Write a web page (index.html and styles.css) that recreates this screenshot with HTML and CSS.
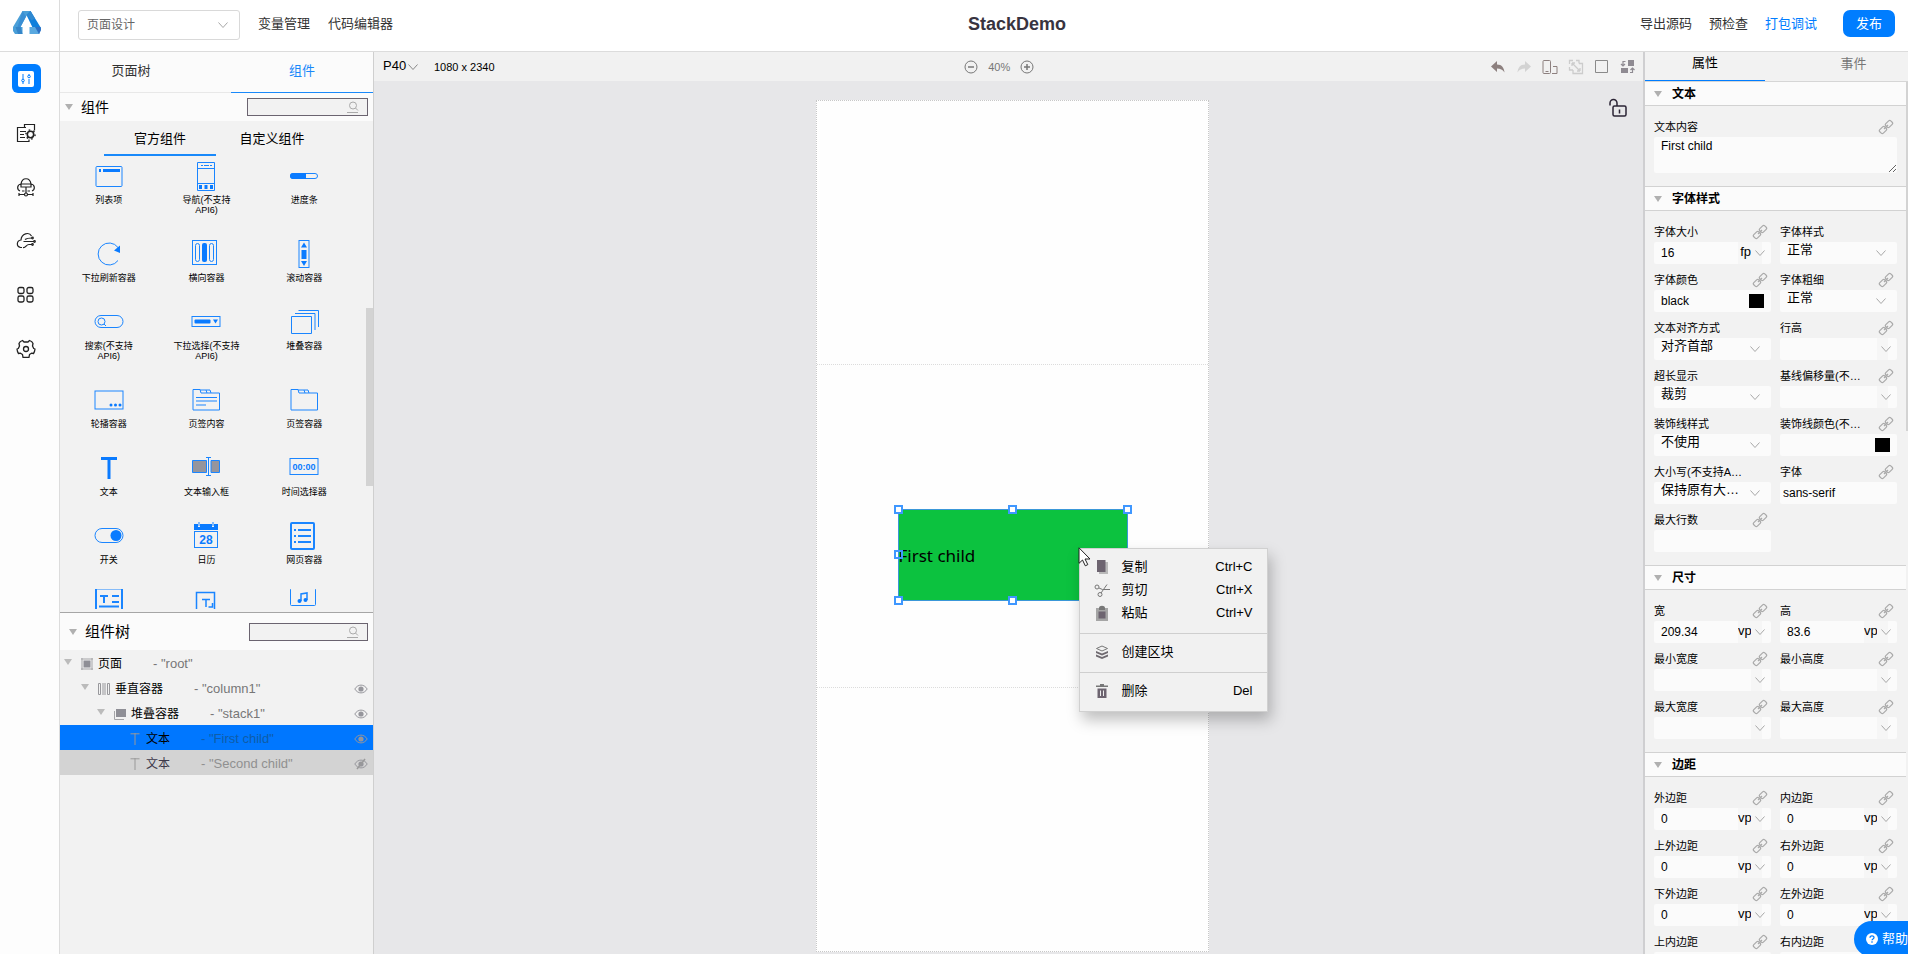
FILE: index.html
```html
<!DOCTYPE html>
<html lang="zh-CN">
<head>
<meta charset="utf-8">
<title>StackDemo</title>
<link rel="stylesheet" href="styles.css">
</head>
<body>
<svg class="sprite" aria-hidden="true">
  <symbol id="chev" viewBox="0 0 12 12"><path d="M1.500 3.500 6 8.500 10.500 3.500" fill="none" stroke="currentColor"/></symbol>
  <symbol id="tri" viewBox="0 0 8 6"><path d="M0 0h8L4 6z" fill="currentColor"/></symbol>
  <symbol id="link" viewBox="0 0 16 16"><g fill="none" stroke="currentColor" stroke-width="1.200"><rect x="7.500" y="2.500" width="7" height="5" rx="1.500" transform="rotate(-45 11 5)"/><rect x="1.500" y="8.500" width="7" height="5" rx="1.500" transform="rotate(-45 5 11)"/><path d="M6 10l4-4"/></g></symbol>
  <symbol id="mag" viewBox="0 0 12 12"><g fill="none" stroke="currentColor"><circle cx="6" cy="4.500" r="3.500"/><path d="M8.500 7l2.500 2.500M0 11.500h11"/></g></symbol>
  <symbol id="eye" viewBox="0 0 14 12"><path d="M.8 6C4 .8 10 .8 13.200 6 10 11.200 4 11.200.8 6z" fill="none" stroke="currentColor"/><circle cx="7" cy="6" r="2.600" fill="currentColor"/></symbol>
</svg>

<header class="topbar">
  <a class="logo" href="#" aria-label="首页">
    <svg width="30" height="26" viewBox="0 0 30 26"><path d="M10.500 1h8L20 4l-5 1L8.500 17H1z" fill="#4a9fd8"/><path d="M10.500 1 14 6.500 8.500 17H5.500z" fill="#3a8fd4"/><path d="M18.500 1 29 18l-1 4-4.500 1.500-2.500-5L14.500 5z" fill="#0f7fdc"/><path d="M18.500 1l4.500 7.500-3.500 2-5-5.500z" fill="#2f88d0"/><path d="M1 17h9.500v7H3L1 21z" fill="#4a9fd8"/><path d="M3.500 17h5l2 7H6z" fill="#3585c8"/><path d="M17.500 17h6l4.500 6-1 1h-9.500z" fill="#5aa9e0"/><path d="M23 17l5.500 0 .5 3-2 4z" fill="#2b6fc4"/></svg>
  </a>
  <div class="topbar-left">
    <div class="mode">
      <select aria-label="模式"><option>页面设计</option></select>
      <svg class="chev" width="12" height="12"><use href="#chev"/></svg>
    </div>
    <a href="#">变量管理</a>
    <a href="#">代码编辑器</a>
  </div>
  <h1>StackDemo</h1>
  <nav class="topbar-right">
    <a href="#">导出源码</a>
    <a href="#">预检查</a>
    <a href="#" class="accent">打包调试</a>
    <button class="publish" type="button">发布</button>
  </nav>
</header>

<div class="workspace">
  <nav class="rail">
    <button type="button" class="on" aria-label="设计"><svg width="16" height="16" viewBox="0 0 16 16"><rect width="16" height="16" rx="2" fill="#fff"/><g stroke="#007dff" fill="none"><path d="M5 3v5M5 11v2M11 3v1M11 8v5"/><circle cx="5" cy="9.500" r="1.300"/><circle cx="11" cy="5.500" r="1.300"/></g></svg></button>
    <button type="button" aria-label="数据模型"><svg width="20" height="20" viewBox="0 0 20 20" fill="none" stroke="#222" stroke-width="1.200"><path d="M8.500 4V1.500H18.500v6M10 4.500H1.500v14H13v-2M4 8.500h6M4 11.500h4M4 14.500h5"/><circle cx="14.500" cy="11.500" r="3.200" stroke-width="1.600"/><circle cx="14.500" cy="11.500" r="4.600" stroke-width="1.400" stroke-dasharray="1.600 3.200"/></svg></button>
    <button type="button" aria-label="云连接"><svg width="20" height="20" viewBox="0 0 20 20" fill="none" stroke="#222" stroke-width="1.200"><path d="M4 14c-3.500-1.500-3-6.500 1-7C6 0 14 0 15 7c4 .5 4.500 5.500 1 7M5 7h10v3H5zM10 10v6M3 17.500h14M6 14h2.500M11.500 14H14"/><circle cx="10" cy="17.500" r="1.500" fill="#fff"/><path d="M3 16v3M17 16v3"/></svg></button>
    <button type="button" aria-label="云函数"><svg width="20" height="20" viewBox="0 0 20 20" fill="none" stroke="#222" stroke-width="1.200"><path d="M6 16.500H4.500C0 15.500.5 9.500 5 9 5.500 2.500 13 .5 15.500 5M7 16.500c3 .5 3-3 6-3h3M7.500 10.500H18M9 8.500c2-1.500 4-1.500 7-1.500"/><circle cx="16.500" cy="7" r=".8"/><circle cx="18.500" cy="10.500" r=".8"/><circle cx="16.500" cy="13.500" r=".8"/></svg></button>
    <button type="button" aria-label="模块"><svg width="20" height="20" viewBox="0 0 20 20" fill="none" stroke="#222" stroke-width="1.300"><rect x="2" y="2.500" width="6" height="6" rx="1.800"/><rect x="11" y="2.500" width="6" height="6" rx="1.800"/><rect x="2" y="11" width="6" height="6" rx="1.800"/><rect x="11" y="11" width="6" height="6" rx="1.800"/></svg></button>
    <button type="button" aria-label="设置"><svg width="20" height="20" viewBox="0 0 20 20" fill="none" stroke="#222" stroke-width="1.300"><path d="M6.500 1.500 8 3h4l1.500-1.500c2 .7 3 1.700 3.500 3L16.500 7l1.200 2.500L19 10c-.2 2-.6 3.300-1.500 4.500l-2-.3-2 1.300-.5 2.800h-6l-.5-2.800-2-1.300-2 .3C1.600 13.300 1.200 12 1 10l1.300-.5L3.500 7 3 4.500c.5-1.300 1.500-2.300 3.500-3z" stroke-linejoin="round"/><circle cx="10" cy="10" r="2.500"/></svg></button>
  </nav>

  <aside class="library">
    <div class="tabs"><button type="button">页面树</button><button type="button" class="on">组件</button></div>
    <div class="panel-head">
      <svg class="tri" width="8" height="6"><use href="#tri"/></svg><h2>组件</h2>
      <div class="search"><input type="text" aria-label="搜索组件"><svg width="12" height="12"><use href="#mag"/></svg></div>
    </div>
    <div class="components">
      <div class="subtabs"><button type="button" class="on">官方组件</button><button type="button">自定义组件</button></div>
      <ul class="palette">
        <li><svg viewBox="0 0 30 30"><rect x="2" y="5.500" width="26" height="20" rx="1"/><path class="f" d="M5 8h2v3H5zM9 8h17v3H9z"/></svg><span>列表项</span></li>
        <li><svg viewBox="0 0 30 30"><path d="M6.500 1.500h17v28h-17zM6.500 7.500h17M6.500 22.500h17M10 4.500h2M13 4.500h5M19 4.500h2"/><path class="f" d="M8 24h3v4H8zM13.500 24h3v4h-3zM19 24h3v4h-3z"/></svg><span>导航(不支持API6)</span></li>
        <li><svg viewBox="0 0 30 30"><rect x="1.500" y="12.500" width="27" height="5" rx="2.500"/><path class="f" d="M4 12h13v6H4a3 3 0 0 1 0-6z"/></svg><span>进度条</span></li>
        <li><svg viewBox="0 0 30 30"><path d="M24 21.500a11 11 0 1 1 0-13"/><path class="f" d="M20 11.500 26 6.500V14z"/></svg><span>下拉刷新容器</span></li>
        <li><svg viewBox="0 0 30 30"><rect x="1.500" y="1.500" width="24" height="24"/><rect x="4.500" y="4.500" width="4" height="18" rx="2"/><rect class="f" x="11" y="4" width="5" height="19" rx="2"/><rect x="18.500" y="4.500" width="4" height="18" rx="2"/></svg><span>横向容器</span></li>
        <li><svg viewBox="0 0 30 30"><rect x="10" y="1.500" width="10" height="27"/><path class="f" d="M15 3.500l3 5h-6zM12.500 11h5v9h-5zM12 22h6l-3 5z"/></svg><span>滚动容器</span></li>
        <li><svg viewBox="0 0 30 30"><rect x="1" y="8.500" width="28" height="12" rx="6"/><circle cx="7.500" cy="14.500" r="3.500"/><path d="M10 17l2 2"/></svg><span>搜索(不支持API6)</span></li>
        <li><svg viewBox="0 0 30 30"><rect x="1" y="9.500" width="28" height="10"/><rect class="f" x="3.500" y="12.500" width="16" height="4" rx="1"/><path class="f" d="M22 12.500h5l-2.500 4z"/></svg><span>下拉选择(不支持API6)</span></li>
        <li><svg viewBox="0 0 30 30"><path d="M2.500 9.500h20v17h-20zM6 6.500h20V23M9.500 3.500h20V20"/></svg><span>堆叠容器</span></li>
        <li><svg viewBox="0 0 30 30"><rect x="1" y="6" width="28" height="18"/><circle class="f" cx="17" cy="20" r="1.500"/><circle class="f" cx="21.500" cy="20" r="1.500"/><circle class="f" cx="26" cy="20" r="1.500"/></svg><span>轮播容器</span></li>
        <li><svg viewBox="0 0 30 30"><path d="M2 24.500v-20h7l1 3.500h18.500v17H2zM9 5h6l1 3M15 5h4l1 3M5 12.500h21M5 16h21M5 20h10"/></svg><span>页签内容</span></li>
        <li><svg viewBox="0 0 30 30"><path d="M2 24.500v-20h7l1 3.500h18.500v17H2zM9 5h6l1 3M15 5h4l1 3"/></svg><span>页签容器</span></li>
        <li><svg viewBox="0 0 30 30"><path class="f" d="M7 4h16v3h-6.500v19h-3V7H7z"/></svg><span>文本</span></li>
        <li><svg viewBox="0 0 30 30"><path class="g" d="M1.500 7.500h14v12h-14zM20 7.500h8.500v12H20z"/><path d="M17.500 5v18M15 4.500h5M15 22.500h5"/></svg><span>文本输入框</span></li>
        <li><svg viewBox="0 0 30 30"><rect x="1" y="5.500" width="28" height="16"/><text x="15" y="17" font-size="9">00:00</text></svg><span>时间选择器</span></li>
        <li><svg viewBox="0 0 30 30"><rect x="1" y="7.500" width="28" height="14" rx="7"/><circle class="f" cx="22" cy="14.500" r="5.500"/></svg><span>开关</span></li>
        <li><svg viewBox="0 0 30 30"><rect x="3.500" y="10.500" width="23" height="16"/><path class="f" d="M3 3h4v3h2V3h12v3h2V3h4v6H3z"/><path d="M8 1v4M22 1v4"/><text x="15" y="23" font-size="12">28</text></svg><span>日历</span></li>
        <li><svg viewBox="0 0 30 30"><rect x="2" y="2" width="23" height="26" rx="1" stroke-width="2"/><path stroke-width="2" d="M5 9h2M9 9h13M5 15h2M9 15h13M5 21h2M9 21h13"/></svg><span>网页容器</span></li>
        <li><svg viewBox="0 0 30 30"><path stroke-width="2" d="M2 30V-.5h26V30M6 7h8M10 7v7M18 7h7M18 13h7M5 17.500h20"/></svg></li>
        <li><svg viewBox="0 0 30 30"><path d="M5.500 30V3.500h18V30M11 10.500h8M15 10.500V18M17.500 18h4v-4" stroke-width="1.500"/></svg></li>
        <li><svg viewBox="0 0 30 30"><rect x="1.500" y="-.5" width="25" height="17" rx="1"/><path d="M12 12V5l6-1v7" stroke-width="1.500"/><circle class="f" cx="10.500" cy="12" r="2"/><circle class="f" cx="16.500" cy="11" r="2"/></svg></li>
      </ul>
      <div class="scroll-thumb"></div>
    </div>
    <div class="panel-head tree-head">
      <svg class="tri" width="8" height="6"><use href="#tri"/></svg><h2>组件树</h2>
      <div class="search"><input type="text" aria-label="搜索组件树"><svg width="12" height="12"><use href="#mag"/></svg></div>
    </div>
    <ul class="tree">
      <li class="lv0"><svg class="tri" width="8" height="6"><use href="#tri"/></svg><svg width="12" height="12" viewBox="0 0 12 12"><path d="M1 0v12M11 0v12M0 1h12M0 11h12" stroke="#a5a5a8"/><path d="M2.500 2.500h7v7h-7z" fill="#8f8f96"/></svg><b>页面</b><i>- "root"</i></li>
      <li class="lv1"><svg class="tri" width="8" height="6"><use href="#tri"/></svg><svg width="12" height="12" viewBox="0 0 12 12" fill="none" stroke="#98989c"><path d="M.5.500h2v11h-2zM9.500.500h2v11h-2zM5 0v12M7 0v12"/></svg><b>垂直容器</b><i>- "column1"</i><svg class="eye" width="14" height="12"><use href="#eye"/></svg></li>
      <li class="lv2"><svg class="tri" width="8" height="6"><use href="#tri"/></svg><svg width="12" height="12" viewBox="0 0 12 12"><path d="M2 1h10v8H2z" fill="#8f8f96"/><path d="M.5 3v8.500H10" fill="none" stroke="#a5a5a8"/></svg><b>堆叠容器</b><i>- "stack1"</i><svg class="eye" width="14" height="12"><use href="#eye"/></svg></li>
      <li class="lv3 selected"><svg width="12" height="12" viewBox="0 0 12 12"><path d="M1.500.8h9M6 0v12" stroke="#999" fill="none"/></svg><b>文本</b><i>- "First child"</i><svg class="eye" width="14" height="12"><use href="#eye"/></svg></li>
      <li class="lv3 hidden-node"><svg width="12" height="12" viewBox="0 0 12 12"><path d="M1.500.8h9M6 0v12" stroke="#999" fill="none"/></svg><b>文本</b><i>- "Second child"</i><svg class="eye" width="14" height="12" viewBox="0 0 14 12"><use href="#eye"/><path d="M3 11 11 1" stroke="#999" stroke-width="1.500"/></svg></li>
    </ul>
  </aside>

  <main class="stage">
    <div class="toolbar">
      <div class="device"><select aria-label="设备"><option>P40</option></select><svg class="chev" width="12" height="12"><use href="#chev"/></svg></div>
      <span class="size">1080 x 2340</span>
      <div class="zoom">
        <button type="button" aria-label="缩小"><svg width="14" height="14" viewBox="0 0 14 14" fill="none" stroke="#777"><circle cx="7" cy="7" r="6"/><path d="M4 7h6" stroke-width="1.500"/></svg></button>
        <span>40%</span>
        <button type="button" aria-label="放大"><svg width="14" height="14" viewBox="0 0 14 14" fill="none" stroke="#777"><circle cx="7" cy="7" r="6"/><path d="M4 7h6M7 4v6" stroke-width="1.500"/></svg></button>
      </div>
      <div class="tools">
        <button type="button" aria-label="撤销"><svg width="16" height="16" viewBox="0 0 16 16"><path d="M1 7.500 7 2v3.500c5 0 7 3.500 7.500 8C12.500 10.500 10.500 9.500 7 9.500V13z" fill="#8d807f"/></svg></button>
        <button type="button" aria-label="重做"><svg width="16" height="16" viewBox="0 0 16 16"><path d="M15 7.500 9 2v3.500c-5 0-7 3.500-7.500 8C3.500 10.500 5.500 9.500 9 9.500V13z" fill="#d3d3d3"/></svg></button>
        <button type="button" aria-label="多设备"><svg width="16" height="16" viewBox="0 0 16 16" fill="none" stroke="#8d807f"><rect x="1" y="1.500" width="7.500" height="13" rx="1"/><path d="M3.500 12.500h3M11 7.500h4v7h-5"/></svg></button>
        <button type="button" aria-label="适应窗口"><svg width="16" height="16" viewBox="0 0 16 16" fill="none" stroke="#ccc"><path d="M1.500 5V1.500H5M11 4.500h3.500v10H5V11M1.500 8v3H5M8 1.500h3v3M4 4l8 8M4 4h3M4 4v3M12 12H9M12 12V9" stroke-width="1.300"/></svg></button>
        <button type="button" aria-label="边框"><svg width="16" height="16" viewBox="0 0 16 16" fill="none" stroke="#8a8a8a"><path d="M1.500 1.500h12v12h-12z"/></svg></button>
        <button type="button" aria-label="转换"><svg width="16" height="16" viewBox="0 0 16 16"><path d="M8 1h6v6H8zM1 9h7v5H1z" fill="#8f8b92"/><path d="M5.500 2.500H3V7M1 5l2 2 2-2M10 13.500h2.500V9M10.500 11l2-2 2 2" fill="none" stroke="#8f8b92" stroke-width="1.200"/></svg></button>
      </div>
    </div>
    <div class="canvas">
      <button class="lock" type="button" aria-label="解锁"><svg width="20" height="20" viewBox="0 0 20 20" fill="none" stroke="#2b2435" stroke-width="1.500"><rect x="5" y="8" width="13" height="10" rx="1.500"/><path d="M2 7.500V5a3.500 3.500 0 0 1 7 0v3M11.500 11.500v4"/></svg></button>
      <div class="artboard">
        <span class="guide one"></span><span class="guide two"></span>
        <div class="node">First child
          <i class="h tl"></i><i class="h tc"></i><i class="h tr"></i><i class="h ml"></i><i class="h bl"></i><i class="h bc"></i>
        </div>
        <div class="menu">
          <div class="group">
            <button type="button"><svg width="16" height="16" viewBox="0 0 16 16"><path d="M5 3h9v12H5z" fill="#b9b9b9"/><path d="M3 1h8.500v12H3z" fill="#6d6470"/></svg>复制<kbd>Ctrl+C</kbd></button>
            <button type="button"><svg width="16" height="16" viewBox="0 0 16 16" fill="none" stroke="#777"><circle cx="3" cy="5" r="2"/><circle cx="6" cy="12.500" r="2"/><path d="M5 6l3.500 1.500H16M7 11l6-8.500"/></svg>剪切<kbd>Ctrl+X</kbd></button>
            <button type="button"><svg width="16" height="16" viewBox="0 0 16 16"><path d="M2 3h12v13H2z" fill="#a5a5a5"/><path d="M5 3c0-3 6-3 6 0v2H5z" fill="#777"/><path d="M4.500 6.500h7v7h-7z" fill="#6d6470"/></svg>粘贴<kbd>Ctrl+V</kbd></button>
          </div>
          <div class="group">
            <button type="button"><svg width="16" height="16" viewBox="0 0 16 16"><path d="M8 2l5.500 2.500L8 7 2.500 4.500z" fill="none" stroke="#777"/><path d="M2 7l6 2.500L14 7v2l-6 2.500L2 9zM2 10.500 8 13l6-2.500v2L8 15l-6-2.500z" fill="#6f6a70"/></svg>创建区块</button>
          </div>
          <div class="group">
            <button type="button"><svg width="16" height="16" viewBox="0 0 16 16"><path d="M2 2.500h4V1h4v1.500h4V4H2z" fill="#777"/><path d="M3.500 5.500h9V15h-9z" fill="#6d6470"/><path d="M6.500 7.500V13M9.500 7.500V13" stroke="#eee"/></svg>删除<kbd>Del</kbd></button>
          </div>
        </div>
        <svg class="cursor" width="14" height="20" viewBox="0 0 14 20"><path d="M1 .8v15.500l3.500-3.300 2.800 5.800 2.500-1.200-2.800-5.600H12z" fill="#fff" stroke="#222"/></svg>
      </div>
    </div>
  </main>

  <aside class="inspector">
    <div class="tabs"><button type="button" class="on">属性</button><button type="button">事件</button></div>
    <div class="sections">
      <section>
        <h3><svg class="tri" width="8" height="6"><use href="#tri"/></svg>文本</h3>
        <div class="fields">
          <div class="field wide"><div class="cap"><label for="txt">文本内容</label><svg><use href="#link"/></svg></div><textarea id="txt">First child</textarea></div>
        </div>
      </section>
      <section>
        <h3><svg class="tri" width="8" height="6"><use href="#tri"/></svg>字体样式</h3>
        <div class="fields">
          <div class="field"><div class="cap"><label for="fs">字体大小</label><svg><use href="#link"/></svg></div><div class="ctl"><input id="fs" type="text" value="16"><span class="unit"><select aria-label="单位"><option>fp</option></select><svg class="chev"><use href="#chev"/></svg></span></div></div>
          <div class="field"><div class="cap"><label for="fst">字体样式</label></div><div class="ctl pick"><select id="fst"><option>正常</option></select><svg class="chev"><use href="#chev"/></svg></div></div>
          <div class="field"><div class="cap"><label for="fc">字体颜色</label><svg><use href="#link"/></svg></div><div class="ctl"><input id="fc" type="text" value="black"><span class="swatch"></span></div></div>
          <div class="field"><div class="cap"><label for="fw">字体粗细</label><svg><use href="#link"/></svg></div><div class="ctl pick"><select id="fw"><option>正常</option></select><svg class="chev"><use href="#chev"/></svg></div></div>
          <div class="field"><div class="cap"><label for="ta">文本对齐方式</label></div><div class="ctl pick"><select id="ta"><option>对齐首部</option></select><svg class="chev"><use href="#chev"/></svg></div></div>
          <div class="field"><div class="cap"><label for="lh">行高</label><svg><use href="#link"/></svg></div><div class="ctl"><input id="lh" type="text"><span class="unit blank"><select aria-label="单位"><option></option></select><svg class="chev"><use href="#chev"/></svg></span></div></div>
          <div class="field"><div class="cap"><label for="of">超长显示</label></div><div class="ctl pick"><select id="of"><option>裁剪</option></select><svg class="chev"><use href="#chev"/></svg></div></div>
          <div class="field"><div class="cap"><label for="bo">基线偏移量(不…</label><svg><use href="#link"/></svg></div><div class="ctl"><input id="bo" type="text"><span class="unit blank"><select aria-label="单位"><option></option></select><svg class="chev"><use href="#chev"/></svg></span></div></div>
          <div class="field"><div class="cap"><label for="ds">装饰线样式</label></div><div class="ctl pick"><select id="ds"><option>不使用</option></select><svg class="chev"><use href="#chev"/></svg></div></div>
          <div class="field"><div class="cap"><label for="dc">装饰线颜色(不…</label><svg><use href="#link"/></svg></div><div class="ctl"><input id="dc" type="text"><span class="swatch"></span></div></div>
          <div class="field"><div class="cap"><label for="tc">大小写(不支持A…</label></div><div class="ctl pick"><select id="tc"><option>保持原有大…</option></select><svg class="chev"><use href="#chev"/></svg></div></div>
          <div class="field"><div class="cap"><label for="ff">字体</label><svg><use href="#link"/></svg></div><div class="ctl tight"><input id="ff" type="text" value="sans-serif"></div></div>
          <div class="field"><div class="cap"><label for="ml">最大行数</label><svg><use href="#link"/></svg></div><div class="ctl"><input id="ml" type="text"></div></div>
        </div>
      </section>
      <section>
        <h3><svg class="tri" width="8" height="6"><use href="#tri"/></svg>尺寸</h3>
        <div class="fields">
          <div class="field"><div class="cap"><label for="w">宽</label><svg><use href="#link"/></svg></div><div class="ctl"><input id="w" type="text" value="209.34"><span class="unit"><select aria-label="单位"><option>vp</option></select><svg class="chev"><use href="#chev"/></svg></span></div></div>
          <div class="field"><div class="cap"><label for="h">高</label><svg><use href="#link"/></svg></div><div class="ctl"><input id="h" type="text" value="83.6"><span class="unit"><select aria-label="单位"><option>vp</option></select><svg class="chev"><use href="#chev"/></svg></span></div></div>
          <div class="field"><div class="cap"><label for="mw">最小宽度</label><svg><use href="#link"/></svg></div><div class="ctl"><input id="mw" type="text"><span class="unit blank"><select aria-label="单位"><option></option></select><svg class="chev"><use href="#chev"/></svg></span></div></div>
          <div class="field"><div class="cap"><label for="mh">最小高度</label><svg><use href="#link"/></svg></div><div class="ctl"><input id="mh" type="text"><span class="unit blank"><select aria-label="单位"><option></option></select><svg class="chev"><use href="#chev"/></svg></span></div></div>
          <div class="field"><div class="cap"><label for="xw">最大宽度</label><svg><use href="#link"/></svg></div><div class="ctl"><input id="xw" type="text"><span class="unit blank"><select aria-label="单位"><option></option></select><svg class="chev"><use href="#chev"/></svg></span></div></div>
          <div class="field"><div class="cap"><label for="xh">最大高度</label><svg><use href="#link"/></svg></div><div class="ctl"><input id="xh" type="text"><span class="unit blank"><select aria-label="单位"><option></option></select><svg class="chev"><use href="#chev"/></svg></span></div></div>
        </div>
      </section>
      <section>
        <h3><svg class="tri" width="8" height="6"><use href="#tri"/></svg>边距</h3>
        <div class="fields">
          <div class="field"><div class="cap"><label for="m">外边距</label><svg><use href="#link"/></svg></div><div class="ctl"><input id="m" type="text" value="0"><span class="unit"><select aria-label="单位"><option>vp</option></select><svg class="chev"><use href="#chev"/></svg></span></div></div>
          <div class="field"><div class="cap"><label for="p">内边距</label><svg><use href="#link"/></svg></div><div class="ctl"><input id="p" type="text" value="0"><span class="unit"><select aria-label="单位"><option>vp</option></select><svg class="chev"><use href="#chev"/></svg></span></div></div>
          <div class="field"><div class="cap"><label for="mt">上外边距</label><svg><use href="#link"/></svg></div><div class="ctl"><input id="mt" type="text" value="0"><span class="unit"><select aria-label="单位"><option>vp</option></select><svg class="chev"><use href="#chev"/></svg></span></div></div>
          <div class="field"><div class="cap"><label for="mr">右外边距</label><svg><use href="#link"/></svg></div><div class="ctl"><input id="mr" type="text" value="0"><span class="unit"><select aria-label="单位"><option>vp</option></select><svg class="chev"><use href="#chev"/></svg></span></div></div>
          <div class="field"><div class="cap"><label for="mb">下外边距</label><svg><use href="#link"/></svg></div><div class="ctl"><input id="mb" type="text" value="0"><span class="unit"><select aria-label="单位"><option>vp</option></select><svg class="chev"><use href="#chev"/></svg></span></div></div>
          <div class="field"><div class="cap"><label for="mlf">左外边距</label><svg><use href="#link"/></svg></div><div class="ctl"><input id="mlf" type="text" value="0"><span class="unit"><select aria-label="单位"><option>vp</option></select><svg class="chev"><use href="#chev"/></svg></span></div></div>
          <div class="field"><div class="cap"><label for="pt">上内边距</label><svg><use href="#link"/></svg></div><div class="ctl"><input id="pt" type="text"></div></div>
          <div class="field"><div class="cap"><label for="pr">右内边距</label><svg><use href="#link"/></svg></div><div class="ctl"><input id="pr" type="text"></div></div>
        </div>
      </section>
    </div>
    <div class="scroll-thumb"></div>
  </aside>
</div>
<button class="help" type="button"><svg width="12" height="12" viewBox="0 0 12 12"><circle cx="6" cy="6" r="6" fill="#fff"/><path d="M4 4.800c0-2.500 4-2.500 4-.2C8 6 6 6 6 7.300M6 8.300v1.400" fill="none" stroke="#007dff" stroke-width="1.300"/></svg>帮助</button>
</body>
</html>
```
FILE: styles.css
```css
* { box-sizing: border-box; }
html, body { height: 100%; }
body {
  margin: 0;
  display: flex;
  flex-direction: column;
  overflow: hidden;
  background: #fff;
  color: #000;
  font: 13px/20px "Liberation Sans", "Noto Sans CJK SC", sans-serif;
}
h1, h2, h3, ul { margin: 0; padding: 0; }
ul { list-style: none; }
a { color: inherit; text-decoration: none; }
button, input, select, textarea {
  font: inherit;
  color: inherit;
  border: 0;
  margin: 0;
  padding: 0;
  background: none;
  border-radius: 0;
  outline: 0;
  min-width: 0;
}
select { appearance: none; }
svg { display: block; flex: none; }
.sprite { position: absolute; width: 0; height: 0; }
.tri { color: #b0b0b0; }
.chev { color: #a8a8a8; pointer-events: none; }

/* top bar */
.topbar {
  display: grid;
  grid-template-columns: 60px 1fr auto 1fr;
  flex: none;
  height: 52px;
  border-bottom: 1px solid #dcdcdc;
  background: #fff;
  color: #333;
}
.logo { display: grid; place-items: center; padding: 0 6px 5px 0; border-right: 1px solid #dcdcdc; }
.topbar-left { display: flex; gap: 18px; align-items: center; padding: 0 0 4px 18px; }
.mode { display: grid; width: 162px; height: 30px; border: 1px solid #d9d9d9; border-radius: 3px; color: #666; font-size: 12px; margin-top: 2px; }
.mode select, .mode svg { grid-area: 1 / 1; }
.mode select { padding-left: 8px; }
.mode svg { place-self: center end; margin-right: 10px; }
.topbar h1 { align-self: center; padding: 0 0 4px 66px; font-size: 18px; color: #38343f; }
.topbar-right { display: flex; justify-content: flex-end; align-items: center; gap: 17px; padding: 0 13px 4px 0; }
.accent { color: #007dff; }
.publish { width: 52px; height: 27px; margin-left: 9px; border-radius: 7px; background: #007dff; color: #fff; }

.workspace { display: flex; flex: 1; min-height: 0; }

/* icon rail */
.rail { display: flex; flex-direction: column; align-items: center; gap: 25px; flex: none; width: 60px; padding: 12px 7px 0 0; border-right: 1px solid #dcdcdc; background: #fdfdfd; }
.rail button { display: grid; place-items: center; width: 29px; height: 29px; border-radius: 6px; }
.rail .on { background: #007dff; }

/* component library */
.library { display: flex; flex-direction: column; flex: none; width: 314px; border-right: 1px solid #cfcfcf; background: #f2f2f2; }
.library .tabs { display: grid; grid-template-columns: 171fr 142fr; flex: none; height: 41px; background: #fbfbfb; border-bottom: 1px solid #e8e8e8; }
.library .tabs button { margin-bottom: -1px; padding: 0 29px 3px 0; color: #333; }
.library .tabs .on { padding-right: 0; color: #1989fa; border-bottom: 1px solid #1989fa; }
.panel-head { display: flex; align-items: center; flex: none; gap: 8px; height: 28px; padding: 0 5px; background: #fbfbfb; }
.panel-head h2 { flex: 1; font-size: 14px; font-weight: 400; }
.search { display: flex; align-items: center; width: 121px; height: 18px; padding-right: 8px; border: 1px solid #6b6470; background: #f2f2f2; color: #aaa; }
.search input { flex: 1; }
.components { position: relative; flex: none; height: 488px; overflow: hidden; }
.subtabs { display: flex; padding-left: 44px; }
.subtabs button { width: 112px; height: 35px; padding-top: 2px; border-bottom: 2px solid transparent; }
.subtabs .on { border-color: #1989fa; }
.palette { display: grid; grid-template-columns: repeat(3, 1fr); row-gap: 24px; padding: 5px 20px 0 0; }
.palette li { display: flex; flex-direction: column; align-items: center; gap: 4px; font-size: 9px; line-height: 10px; text-align: center; }
.palette span { width: 70px; }
.palette svg { width: 30px; height: 30px; fill: none; stroke: #1a85ff; }
.palette .f { fill: #0a7bff; stroke: none; }
.palette .g { fill: #95959d; }
.palette text { fill: #0a7bff; stroke: none; text-anchor: middle; font-weight: 700; }
.scroll-thumb { position: absolute; right: 0; background: #d3d3d3; }
.components .scroll-thumb { top: 187px; width: 7px; height: 178px; }
.tree-head { height: 38px; margin-top: 3px; padding-left: 9px; border-top: 1px solid #a6a6a6; }
.tree-head h2 { font-size: 15px; }
.tree-head .search { width: 119px; }
.tree li { display: flex; align-items: center; height: 25px; padding: 2px 5px 0 4px; font-size: 12px; }
.tree .tri { margin: 0 9px 4px 0; color: #bbb; }
.tree b { margin: 0 31px 0 5px; font-weight: 400; }
.tree i { flex: 1; font-size: 13px; font-style: normal; color: #777; }
.tree .lv1 { padding-left: 21px; }
.tree .lv2 { padding-left: 37px; }
.tree .lv3 { padding-left: 69px; }
.tree .eye { color: #96969c; }
.tree .selected { background: #0077ff; }
.tree .selected i { color: #0f5da8; }
.tree .hidden-node { background: #d3d3d3; color: #3d394a; }
.tree .hidden-node i { color: #909090; }

/* stage */
.stage { display: flex; flex-direction: column; flex: 1; min-width: 0; background: #e7e7e9; }
.toolbar { display: grid; grid-template-columns: auto auto 1fr 1fr; align-items: center; flex: none; height: 29px; padding: 0 7px 0 9px; background: #f1f1f1; }
.device { display: grid; width: 36px; }
.device select, .device svg { grid-area: 1 / 1; }
.device svg { place-self: center end; color: #888; }
.device select { padding-bottom: 2px; }
.size { margin-left: 15px; font-size: 11px; }
.zoom { display: flex; align-items: center; gap: 10px; justify-self: end; padding-right: 31px; font-size: 11px; color: #777; }
.tools { display: flex; gap: 10px; justify-self: end; }
.canvas { position: relative; display: flex; justify-content: center; flex: 1; min-height: 0; padding: 19px 0 0 7px; overflow: hidden; }
.lock { position: absolute; top: 17px; right: 15px; }
.artboard { position: relative; flex: none; align-self: flex-start; width: 393px; aspect-ratio: 1080 / 2340; background: #fefefe; border: 1px dotted #c8c8c8; }
.guide { position: absolute; left: 0; right: 0; border-top: 1px dotted #dcdcdc; }
.guide.one { top: 263px; }
.guide.two { top: 586px; }
.node { position: absolute; left: 81px; top: 408px; width: 230px; height: 92px; border: 1px solid #3a97d8; background: #0cc23f; font: 17px/92px "Noto Sans", sans-serif; }
.h { position: absolute; width: 9px; height: 9px; border: 2px solid #3f97ff; background: #fff; }
.tl, .tc, .tr { top: -5px; }
.bl, .bc { bottom: -5px; }
.tl, .ml, .bl { left: -5px; }
.tc, .bc { left: 109px; }
.tr { right: -5px; }
.ml { top: 40px; background: none; }
.menu { position: absolute; left: 262px; top: 447px; width: 189px; border: 1px solid #d0d0d0; background: #f1f1f1; box-shadow: 3px 8px 14px rgba(0, 0, 0, .25); }
.group { padding: 6px 0 9px; }
.group + .group { border-top: 1px solid #cfcfcf; }
.menu button { display: flex; align-items: center; gap: 12px; width: 100%; height: 23px; padding: 0 14px; }
.menu kbd { flex: 1; text-align: right; font: 13px/20px "Liberation Sans", sans-serif; }
.cursor { position: absolute; left: 261px; top: 446px; }

/* inspector */
.inspector { position: relative; display: flex; flex-direction: column; flex: none; width: 265px; border-left: 2px solid #cfcfd1; background: #f2f2f2; }
.inspector .tabs { display: grid; grid-template-columns: 120fr 143fr; flex: none; height: 30px; border-bottom: 1px solid #d6d6d6; }
.inspector .tabs button { padding: 0 0 6px 34px; color: #777; }
.inspector .tabs .on { padding-left: 0; border-bottom: 1px solid #007dff; color: #000; }
.sections { flex: 1; min-height: 0; overflow: hidden; margin-right: 2px; }
.inspector > .scroll-thumb { top: 30px; width: 2px; height: 349px; }
.sections h3 { display: flex; align-items: center; gap: 10px; height: 25px; padding-left: 9px; border: 1px solid #d2d2d2; border-width: 1px 0; background: #fbfbfb; font-size: 12px; }
section:first-child h3 { border-top: 0; height: 24px; }
.fields { display: grid; grid-template-columns: 1fr 1fr; gap: 6px 9px; padding: 11px 9px 13px; }
.wide { grid-column: 1 / -1; }
.cap { display: flex; align-items: center; justify-content: space-between; height: 20px; padding-right: 3px; font-size: 11px; }
.cap svg { width: 16px; height: 16px; color: #aaa; }
.ctl { display: flex; align-items: center; height: 22px; padding-left: 7px; background: #fbfbfb; border-radius: 2px; font-size: 12px; }
.ctl input { flex: 1; width: 0; height: 22px; }
.tight { padding-left: 3px; }
.ctl .chev { width: 12px; height: 12px; }
.unit, .pick { font-size: 13px; }
.unit { display: grid; width: 33px; }
.unit > *, .pick > * { grid-area: 1 / 1; }
.unit select { height: 22px; margin-right: 9px; padding: 0 11px 4px 0; background: #f6f6f6; text-align-last: right; }
.blank { width: 20px; }
.unit .chev { place-self: center end; margin-right: 5px; }
.pick { display: grid; }
.pick select { height: 22px; padding-bottom: 6px; line-height: 16px; }
.pick .chev { place-self: center end; margin-right: 10px; }
.swatch { width: 15px; height: 14px; margin-right: 7px; background: #000; }
textarea { display: block; width: 100%; height: 36px; padding: 0 7px; background: #fbfbfb; font-size: 12px; line-height: 18px; border-radius: 2px; resize: vertical; }

.help { position: fixed; right: 0; bottom: -3px; display: flex; align-items: center; gap: 4px; width: 54px; height: 36px; padding-left: 12px; border-radius: 18px 0 0 18px; background: #007dff; color: #fff; overflow: hidden; white-space: nowrap; }
```
